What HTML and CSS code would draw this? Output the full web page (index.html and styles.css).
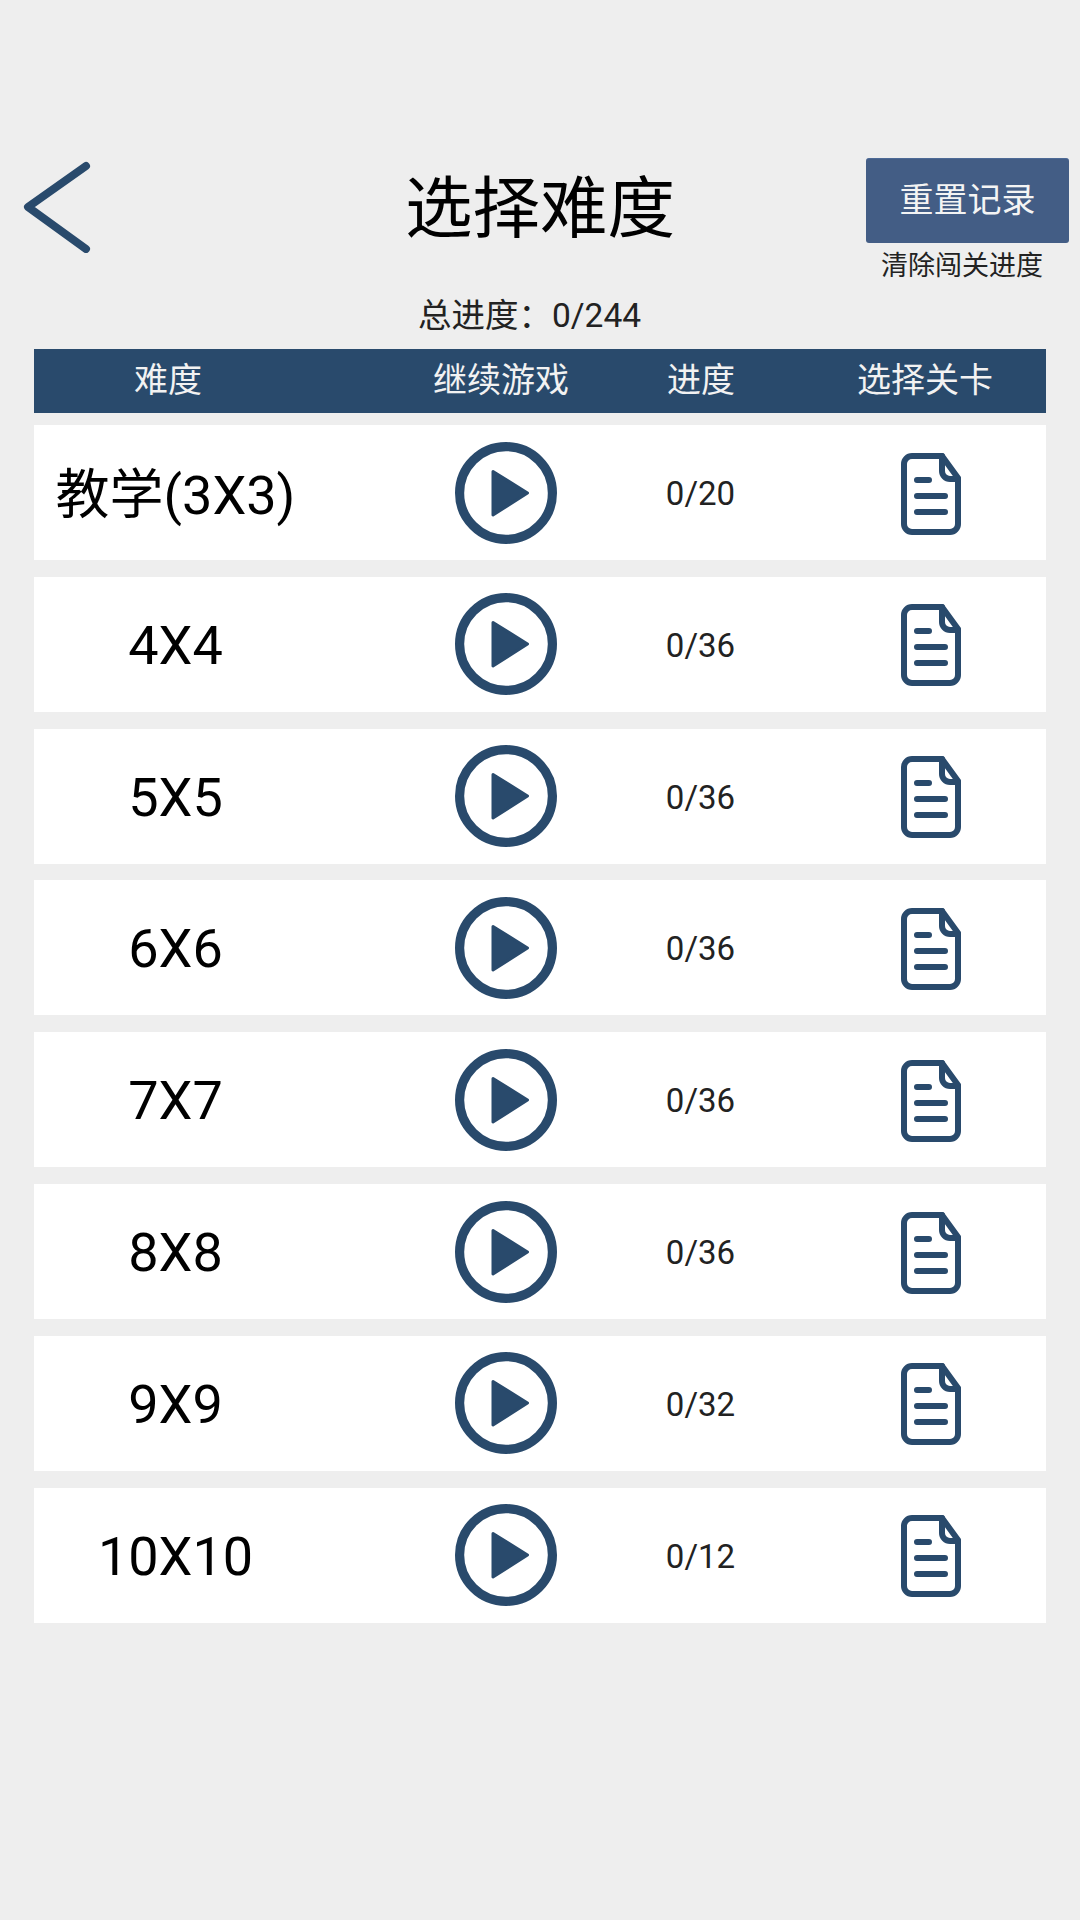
FILE: index.html
```html
<!DOCTYPE html>
<html lang="zh-CN">
<head>
    <meta charset="UTF-8">
    <title>选择难度</title>
    <link rel="stylesheet" href="styles.css">
</head>
<body>
    <svg class="defs" width="0" height="0">
        <symbol id="play" viewBox="0 0 102 102">
            <circle cx="51" cy="51" r="46.4" fill="none" stroke="#294a6c" stroke-width="9.2"/>
            <polygon points="38,29.5 72.5,51 38,73" fill="#294a6c" stroke="#294a6c" stroke-width="3" stroke-linejoin="round"/>
        </symbol>
        <symbol id="doc" viewBox="0 0 60 82">
            <g fill="none" stroke="#294a6c" stroke-width="6" stroke-linecap="round" stroke-linejoin="round">
                <path d="M11 3H41L57 25V71a8 8 0 0 1-8 8H11a8 8 0 0 1-8-8V11a8 8 0 0 1 8-8z"/>
                <path d="M41 3V18a8 8 0 0 0 8 8H57"/>
                <path d="M16 27H28M16 43H44M16 59H44"/>
            </g>
        </symbol>
    </svg>

    <div class="topbar">
        <a class="back" href="#">
            <svg width="72" height="92" viewBox="0 0 72 92">
                <path d="M63 5L5 46L63 88" fill="none" stroke="#294a6c" stroke-width="8" stroke-linecap="round" stroke-linejoin="round"/>
            </svg>
        </a>
        <h1>选择难度</h1>
        <div class="reset">
            <button>重置记录</button>
            <p>清除闯关进度</p>
        </div>
    </div>

    <p class="total">总进度：0/244</p>

    <div class="table-head">
        <span>难度</span>
        <span>继续游戏</span>
        <span>进度</span>
        <span>选择关卡</span>
    </div>

    <div class="rows">
        <div class="row">
            <span class="name">教学(3X3)</span>
            <svg class="play"><use href="#play"/></svg>
            <span class="count">0/20</span>
            <svg class="doc"><use href="#doc"/></svg>
        </div>
        <div class="row">
            <span class="name">4X4</span>
            <svg class="play"><use href="#play"/></svg>
            <span class="count">0/36</span>
            <svg class="doc"><use href="#doc"/></svg>
        </div>
        <div class="row">
            <span class="name">5X5</span>
            <svg class="play"><use href="#play"/></svg>
            <span class="count">0/36</span>
            <svg class="doc"><use href="#doc"/></svg>
        </div>
        <div class="row">
            <span class="name">6X6</span>
            <svg class="play"><use href="#play"/></svg>
            <span class="count">0/36</span>
            <svg class="doc"><use href="#doc"/></svg>
        </div>
        <div class="row">
            <span class="name">7X7</span>
            <svg class="play"><use href="#play"/></svg>
            <span class="count">0/36</span>
            <svg class="doc"><use href="#doc"/></svg>
        </div>
        <div class="row">
            <span class="name">8X8</span>
            <svg class="play"><use href="#play"/></svg>
            <span class="count">0/36</span>
            <svg class="doc"><use href="#doc"/></svg>
        </div>
        <div class="row">
            <span class="name">9X9</span>
            <svg class="play"><use href="#play"/></svg>
            <span class="count">0/32</span>
            <svg class="doc"><use href="#doc"/></svg>
        </div>
        <div class="row">
            <span class="name">10X10</span>
            <svg class="play"><use href="#play"/></svg>
            <span class="count">0/12</span>
            <svg class="doc"><use href="#doc"/></svg>
        </div>
    </div>
</body>
</html>
```

FILE: styles.css
```css
* {
    margin: 0;
    padding: 0;
    box-sizing: border-box;
}

body {
    width: 1080px;
    height: 1920px;
    padding-top: 158px;
    background: #eeeeee;
    font-family: Roboto, "Noto Sans CJK SC", sans-serif;
    color: #111111;
    overflow: hidden;
}

.defs {
    position: absolute;
}

.topbar {
    display: grid;
    grid-template-columns: 351px 378px 1fr;
    height: 128px;
}

.back {
    padding: 3px 0 0 23px;
}

.back svg {
    display: block;
}

h1 {
    padding-top: 4px;
    font-size: 67.5px;
    font-weight: 400;
    line-height: 94px;
    text-align: center;
    color: #000000;
}

.reset {
    display: flex;
    flex-direction: column;
    align-items: center;
    padding-left: 137px;
    padding-right: 11px;
}

.reset button {
    flex: none;
    width: 203px;
    height: 85px;
    padding-bottom: 8px;
    border: none;
    border-top: 1px solid #4d6a96;
    border-radius: 3px;
    background: #435d85;
    color: #f4f4f4;
    font-family: inherit;
    font-size: 34px;
}

.reset p {
    width: 203px;
    margin-top: 4px;
    margin-left: -11px;
    font-size: 27px;
    line-height: 38px;
    text-align: center;
    white-space: nowrap;
    color: #222222;
}

.total {
    height: 63px;
    padding-right: 21px;
    font-size: 33.5px;
    line-height: 59px;
    text-align: center;
    color: #222222;
}

.table-head {
    display: grid;
    grid-template-columns: 336px 262px 138px 1fr;
    align-items: center;
    width: 1012px;
    height: 64px;
    margin-left: 34px;
    padding-bottom: 7px;
    background: #294a6c;
    color: #f2f2f2;
    font-size: 34px;
    text-align: center;
}

.table-head span:first-child {
    padding-right: 68px;
}

.table-head span:last-child {
    padding-left: 34px;
}

.rows {
    display: flex;
    flex-direction: column;
    gap: 16.84px;
    width: 1012px;
    margin: 12px 0 0 34px;
}

.row {
    display: grid;
    grid-template-columns: 389px 166px 223px 1fr;
    align-items: center;
    justify-items: center;
    height: 135px;
    background: #ffffff;
}

.name {
    padding: 2px 106px 0 0;
    font-size: 54px;
    white-space: nowrap;
    color: #000000;
}

.row:first-child .name {
    padding-top: 0;
    padding-bottom: 5px;
}

.play {
    width: 102px;
    height: 102px;
}

.count {
    padding-top: 2px;
    font-size: 33px;
    color: #222222;
}

.doc {
    width: 60px;
    height: 82px;
    margin: 2px 0 0 4px;
}
```
